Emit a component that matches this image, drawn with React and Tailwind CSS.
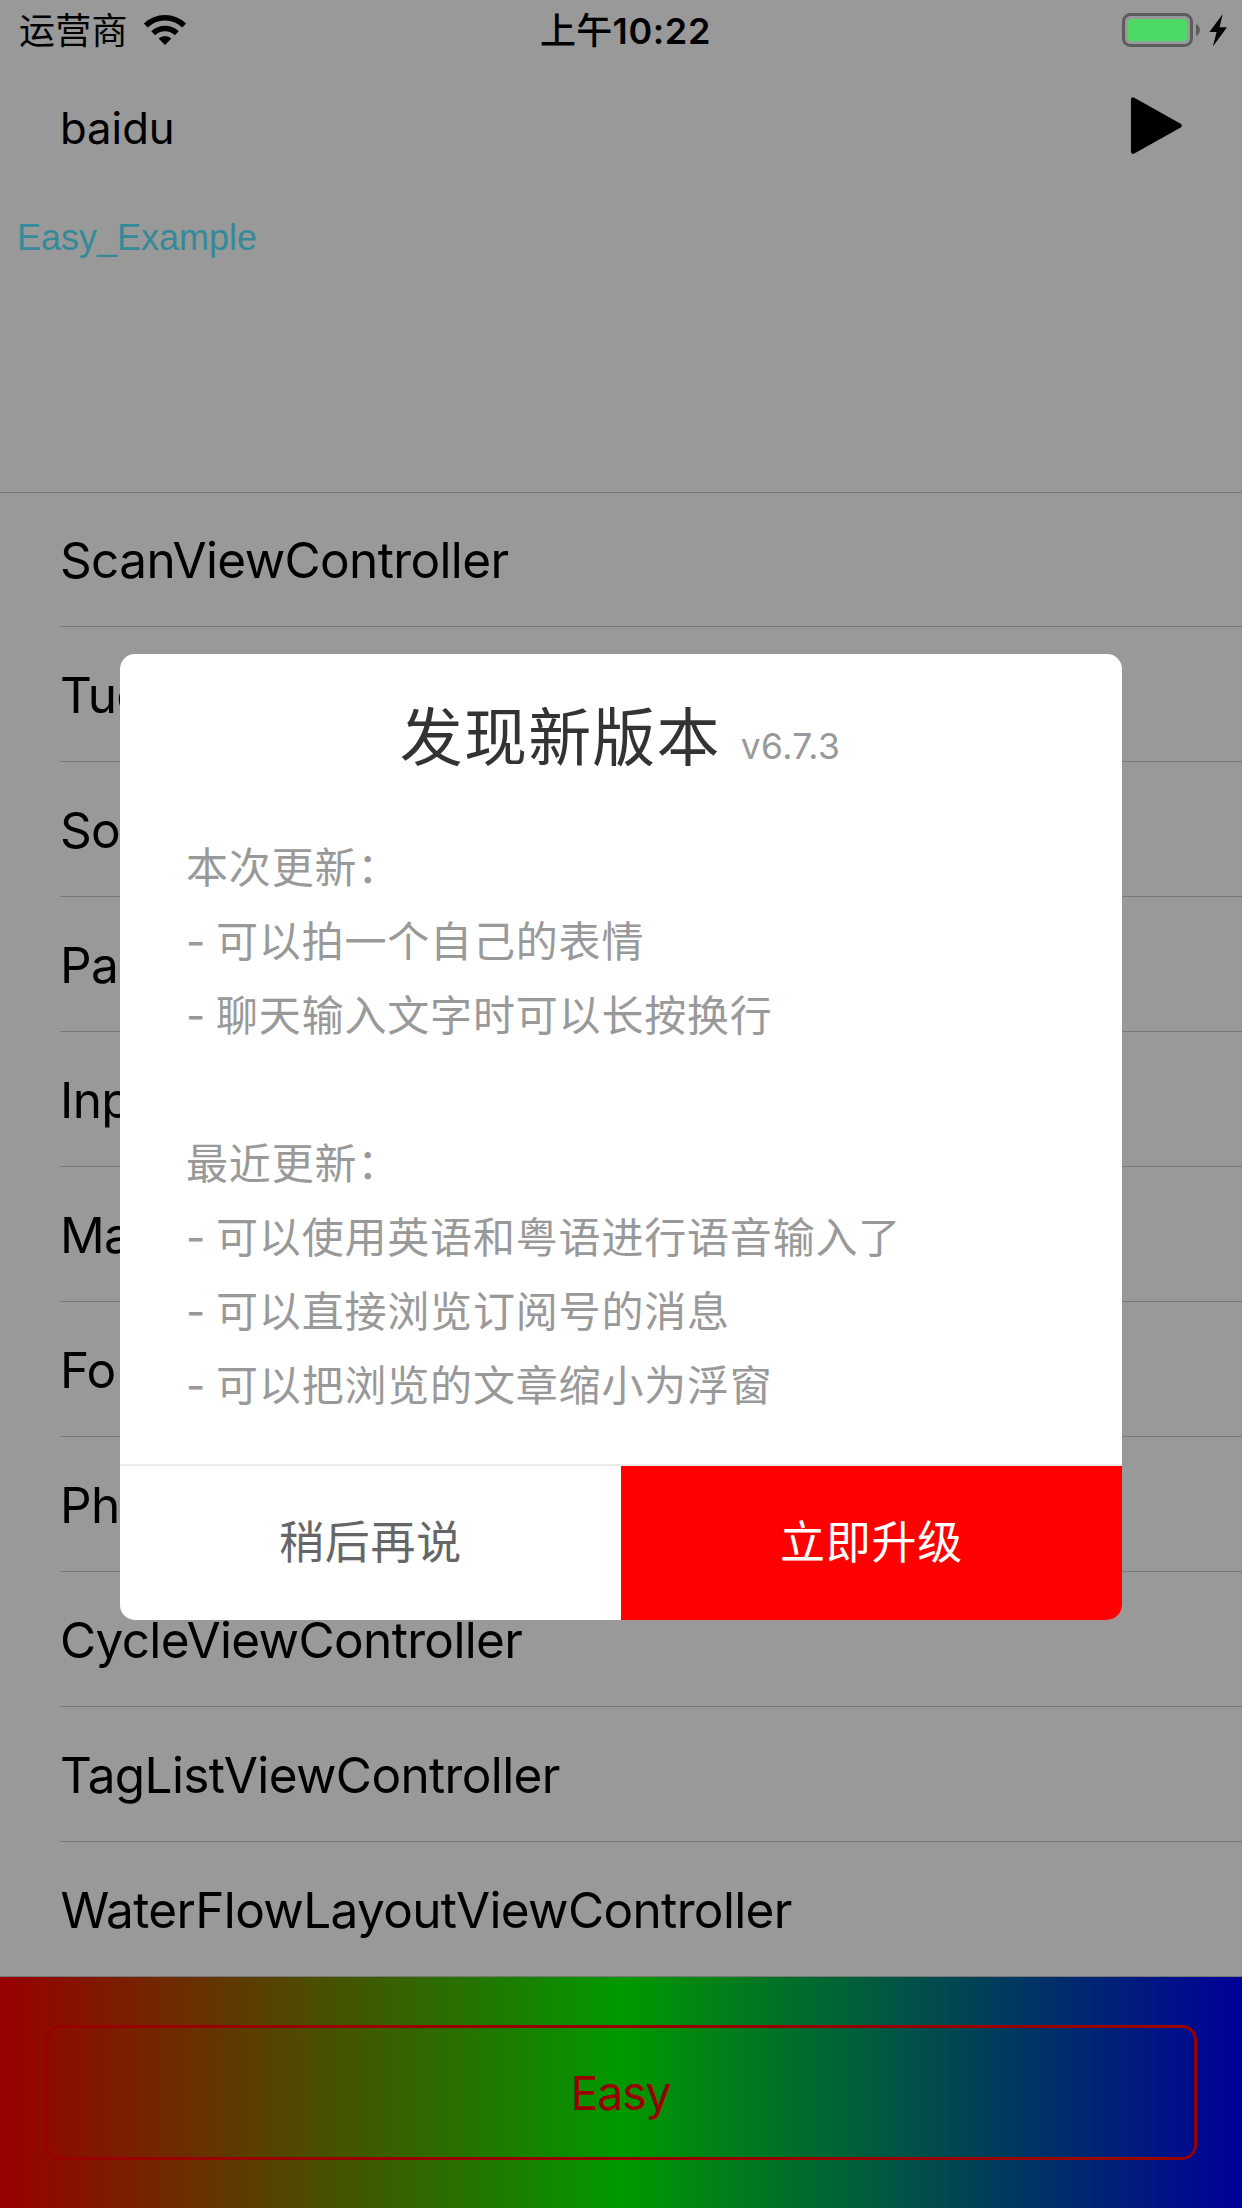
const controllers = [
  "ScanViewController",
  "Tuc",
  "So",
  "Pa",
  "Inp",
  "Ma",
  "Fo",
  "Ph",
  "CycleViewController",
  "TagListViewController",
  "WaterFlowLayoutViewController",
];

const releaseNotes = [
  { title: "本次更新：", items: ["可以拍一个自己的表情", "聊天输入文字时可以长按换行"] },
  {
    title: "最近更新：",
    items: ["可以使用英语和粤语进行语音输入了", "可以直接浏览订阅号的消息", "可以把浏览的文章缩小为浮窗"],
  },
];

function WifiIcon() {
  return (
    <svg className="ml-[15px] mt-[14px] h-[32px] w-[44px]" viewBox="0 0 44 32" fill="none">
      <path d="M2.8 11.6 A27.5 27.5 0 0 1 41.2 11.6" stroke="#000" strokeWidth="5.6" />
      <path d="M10.2 19.2 A17 17 0 0 1 33.8 19.2" stroke="#000" strokeWidth="5.6" />
      <path d="M15.6 24.6 A9.2 9.2 0 0 1 28.4 24.6 L22 31 Z" fill="#000" />
    </svg>
  );
}

function Battery() {
  return (
    <svg className="mt-[13px] h-[35px] w-[106px]" viewBox="0 0 106 35">
      <rect x="1.5" y="1.5" width="68" height="31" rx="7" fill="none" stroke="#5c5c5c" strokeWidth="3" />
      <rect x="5.7" y="6" width="59.6" height="22.3" rx="4" fill="#4cd964" />
      <path d="M74 11 C79.2 13 79.2 21 74 23 Z" fill="#5c5c5c" />
      <path d="M100.6 1.2 L87.4 19 L94.6 19 L90.8 33.6 L105 14.2 L97.6 14.2 Z" fill="#000" />
    </svg>
  );
}

function StatusBar() {
  return (
    <div className="flex h-[60px] font-['Noto_Sans_CJK_SC',sans-serif] text-[36px] leading-[52px] tracking-[0.3px] text-black">
      <div className="flex w-[540px] pl-[19px]">
        <span className="pt-[2px]">运营商</span>
        <WifiIcon />
      </div>
      <div className="pt-[2px] font-medium">
        上午
        <span className="font-['Inter',sans-serif] leading-none font-semibold tracking-[0.6px]">10:22</span>
      </div>
      <div className="ml-auto pr-[14px]">
        <Battery />
      </div>
    </div>
  );
}

function Header() {
  return (
    <header className="h-[432px] font-['Inter',sans-serif]">
      <div className="flex h-[132px] items-start justify-between pr-[59px] pl-[60px]">
        <span className="pt-[39px] text-[43.6px] leading-[60px] text-black">baidu</span>
        <svg className="mt-[37px] h-[58px] w-[53px]" viewBox="0 0 53 58">
          <path d="M3.2 2.6 L49.6 28.6 L3.2 54.6 Z" fill="#000" stroke="#000" strokeWidth="4.5" strokeLinejoin="round" />
        </svg>
      </div>
      <div className="pt-[25px] pl-[17px] font-['Liberation_Sans',sans-serif] text-[36px] leading-[42px] text-[#358a9a]">
        Easy_Example
      </div>
    </header>
  );
}

function ControllerList() {
  return (
    <ul className="h-[1485px] border-t border-b border-[#787879] font-['Inter',sans-serif] text-[49.5px] tracking-[-0.64px] text-black">
      {controllers.map((name, i) => (
        <li
          key={name}
          className={
            i === 0
              ? "ml-[60px] flex h-[134px] items-center border-b border-[#787879] leading-[60px]"
              : i === controllers.length - 1
                ? "ml-[60px] flex h-[134px] items-center pt-[2px] pl-[0.4px] leading-[60px]"
                : "ml-[60px] flex h-[135px] items-center border-b border-[#787879] pt-[2px] leading-[60px]"
          }
        >
          {name}
        </li>
      ))}
    </ul>
  );
}

function Footer() {
  return (
    <footer className="h-[231px] bg-[linear-gradient(to_right,#990000,#009900_50%,#000099)] px-[45px] pt-[48px]">
      <button className="flex h-[135px] w-full items-center justify-center rounded-[15px] border-3 border-[#990000] pt-[1px] pr-[1px] font-['Inter',sans-serif] text-[46.5px] leading-[56px] tracking-[-1.2px] text-[#990000]">
        Easy
      </button>
    </footer>
  );
}

function UpdateDialog() {
  return (
    <div className="absolute inset-0 flex items-start justify-center pt-[654px]">
      <section className="flex h-[966px] w-[1002px] flex-col overflow-hidden rounded-[15px] bg-white font-['Noto_Sans_CJK_SC',sans-serif]">
        <div className="flex items-baseline justify-center gap-[20px] pt-[33px] pr-[2px]">
          <h1 className="text-[63px] leading-[91px] tracking-[1.2px] text-[#333333]">发现新版本</h1>
          <span className="-translate-y-[1px] font-['Inter',sans-serif] text-[35.4px] leading-none tracking-[0.4px] text-[#999999]">v6.7.3</span>
        </div>
        <div className="flex grow flex-col gap-[74px] pt-[50px] pl-[66px] text-[42px] leading-[74px] tracking-[0.82px] text-[#999999]">
          {releaseNotes.map((group) => (
            <div key={group.title}>
              <p>{group.title}</p>
              {group.items.map((item) => (
                <p key={item}>
                  <span className="inline-block w-[30px] font-['Inter',sans-serif] leading-none">-</span>
                  {item}
                </p>
              ))}
            </div>
          ))}
        </div>
        <div className="flex h-[156px] border-t-2 border-[#ebebeb] text-[45px] leading-[65px] tracking-[0.7px]">
          <button className="flex-1 pb-[7px] text-[#666666]">稍后再说</button>
          <button className="flex-1 bg-[#ff0000] pb-[7px] text-white">立即升级</button>
        </div>
      </section>
    </div>
  );
}

export default function App() {
  return (
    <main className="relative h-[2208px] w-[1242px] overflow-hidden bg-[#999999]">
      <StatusBar />
      <Header />
      <ControllerList />
      <Footer />
      <UpdateDialog />
    </main>
  );
}
